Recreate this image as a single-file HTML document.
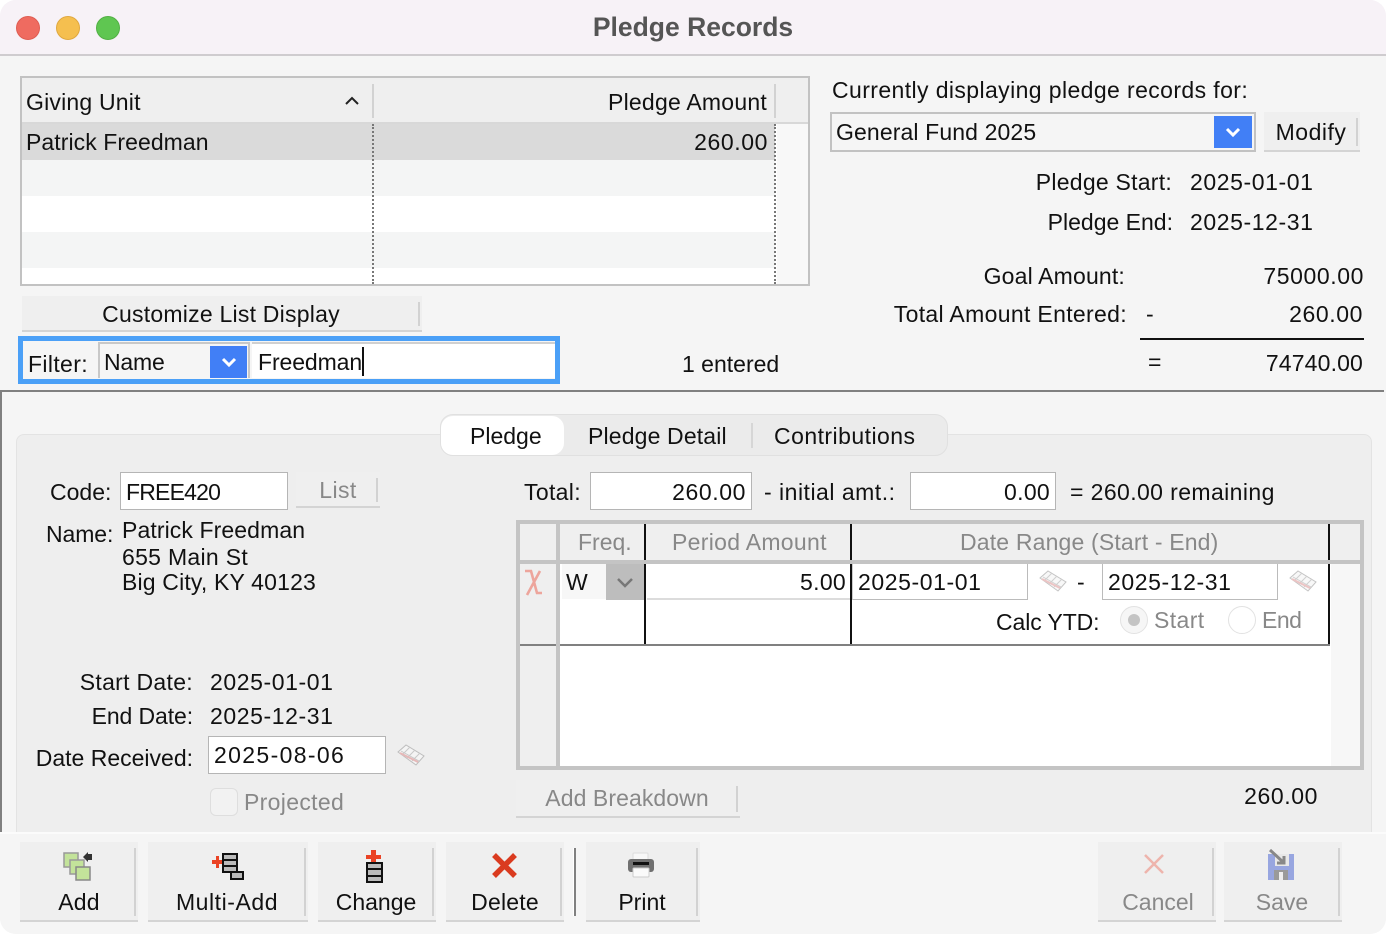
<!DOCTYPE html>
<html><head><meta charset="utf-8"><style>
html,body{margin:0;padding:0;background:#fff}
#w{position:relative;width:1386px;height:934px;overflow:hidden;background:#f5f5f5;border-radius:16px;font-family:"Liberation Sans",sans-serif;font-size:23px;color:#111}
.t{position:absolute;white-space:nowrap;line-height:28px;height:28px}
.g{color:#888}
.d{letter-spacing:.58px}
.b{position:absolute;box-sizing:border-box}
.btn{position:absolute;background:#efefef;border-bottom:2px solid #d4d4d4;box-sizing:border-box}
.btn:after{content:"";position:absolute;right:2px;top:6px;bottom:4px;width:2px;background:#d2d2d2}
.lbl{position:absolute;left:0;right:0;text-align:center;line-height:28px;white-space:nowrap}
svg{position:absolute;overflow:visible}
</style></head><body><div id="w">
<!-- title -->
<div class="b" style="left:0;top:0;width:1386px;height:54px;background:#f7f2f7"></div>
<div class="b" style="left:0;top:54px;width:1386px;height:2px;background:#cfcccf"></div>
<div class="b" style="left:16px;top:16px;width:24px;height:24px;border-radius:50%;background:#ef6b60;border:1px solid #df5d52"></div>
<div class="b" style="left:56px;top:16px;width:24px;height:24px;border-radius:50%;background:#f5bf4f;border:1px solid #e0a83f"></div>
<div class="b" style="left:96px;top:16px;width:24px;height:24px;border-radius:50%;background:#5fc651;border:1px solid #52b044"></div>
<div class="t" style="left:0;width:1386px;text-align:center;top:13px;font-weight:bold;font-size:26.5px;color:#555">Pledge Records</div>

<!-- list table -->
<div class="b" style="left:20px;top:76px;width:790px;height:210px;border:2px solid #c2c2c2;background:#fff"></div>
<div class="b" style="left:22px;top:78px;width:786px;height:44px;background:#efefef"></div>
<div class="b" style="left:22px;top:122px;width:786px;height:2px;background:#d8d8d8"></div>
<div class="b" style="left:22px;top:124px;width:753px;height:36px;background:#dadada"></div>
<div class="b" style="left:22px;top:160px;width:753px;height:36px;background:#f4f5f5"></div>
<div class="b" style="left:22px;top:232px;width:753px;height:36px;background:#f4f5f5"></div>
<div class="b" style="left:777px;top:124px;width:31px;height:160px;background:#f8f8f8"></div>
<div class="b" style="left:372px;top:84px;width:2px;height:34px;background:#d2d2d2"></div>
<div class="b" style="left:774px;top:84px;width:2px;height:34px;background:#d2d2d2"></div>
<div class="b" style="left:372px;top:124px;width:0;height:160px;border-left:2px dotted #777"></div>
<div class="b" style="left:774px;top:124px;width:0;height:160px;border-left:2px dotted #777"></div>
<div class="t" style="left:26px;top:88px;letter-spacing:.2px">Giving Unit</div>
<svg style="left:344px;top:94px" width="16" height="12"><path d="M2 10 L8 4 L14 10" fill="none" stroke="#222" stroke-width="2"/></svg>
<div class="t" style="right:619px;top:88px;letter-spacing:.23px">Pledge Amount</div>
<div class="t" style="left:26px;top:128px;letter-spacing:.07px">Patrick Freedman</div>
<div class="t d" style="right:618px;top:128px">260.00</div>

<!-- right info -->
<div class="t" style="left:832px;top:76px;letter-spacing:.4px">Currently displaying pledge records for:</div>
<div class="b" style="left:830px;top:112px;width:426px;height:40px;border:2px solid #c2c2c2"></div>
<div class="t" style="left:836px;top:118px;letter-spacing:.12px">General Fund 2025</div>
<div class="b" style="left:1214px;top:116px;width:38px;height:32px;background:#417ff6"></div>
<svg style="left:1214px;top:116px" width="38" height="32"><path d="M13 13 L19 19 L25 13" fill="none" stroke="#fff" stroke-width="3"/></svg>
<div class="btn" style="left:1264px;top:112px;width:96px;height:40px"><div class="lbl" style="top:6px;right:2px;letter-spacing:.5px">Modify</div></div>
<div class="t" style="right:214px;top:168px;letter-spacing:.25px">Pledge Start:</div><div class="t d" style="left:1190px;top:168px">2025-01-01</div>
<div class="t" style="right:213px;top:208px">Pledge End:</div><div class="t d" style="left:1190px;top:208px">2025-12-31</div>
<div class="t" style="right:261px;top:262px;letter-spacing:.17px">Goal Amount:</div><div class="t d" style="right:22px;top:262px">75000.00</div>
<div class="t" style="right:259px;top:300px;letter-spacing:.33px">Total Amount Entered:</div><div class="t" style="left:1146px;top:300px">-</div><div class="t d" style="right:23px;top:300px">260.00</div>
<div class="b" style="left:1140px;top:338px;width:224px;height:2px;background:#111"></div>
<div class="t" style="left:1148px;top:348px">=</div><div class="t" style="right:23px;top:349px;letter-spacing:.15px">74740.00</div>
<div class="t" style="left:682px;top:350px">1 entered</div>

<!-- customize & filter -->
<div class="btn" style="left:22px;top:296px;width:400px;height:36px"><div class="lbl" style="top:4px;right:2px;letter-spacing:.23px">Customize List Display</div></div>
<div class="b" style="left:18px;top:336px;width:542px;height:48px;border:5px solid #4ba0f7;background:#f5f5f5"></div>
<div class="t" style="left:28px;top:350px;letter-spacing:.35px">Filter:</div>
<div class="b" style="left:98px;top:342px;width:152px;height:36px;border-left:2px solid #c8c8c8;border-top:2px solid #c8c8c8;border-right:2px solid #c8c8c8"></div>
<div class="t" style="left:104px;top:348px;letter-spacing:-.2px">Name</div>
<div class="b" style="left:210px;top:346px;width:37px;height:32px;background:#417ff6"></div>
<svg style="left:210px;top:346px" width="37" height="32"><path d="M13 13 L19 19 L25 13" fill="none" stroke="#fff" stroke-width="3"/></svg>
<div class="b" style="left:252px;top:342px;width:303px;height:36px;background:#fff;border-top:2px solid #d0d0d0"></div>
<div class="t" style="left:258px;top:348px;letter-spacing:-.1px">Freedman</div>
<div class="b" style="left:362px;top:347px;width:2px;height:29px;background:#111"></div>

<!-- lower -->
<div class="b" style="left:0;top:390px;width:1384px;height:2px;background:#808080"></div>
<div class="b" style="left:0;top:390px;width:2px;height:442px;background:#808080"></div>
<div class="b" style="left:16px;top:434px;width:1356px;height:410px;background:#eeeeee;border:1px solid #e3e3e3;border-radius:8px"></div>
<div class="b" style="left:0;top:832px;width:1386px;height:102px;background:#f5f5f5;border-top:2px solid #fbfbfb"></div>

<!-- tabs -->
<div class="b" style="left:440px;top:414px;width:508px;height:42px;background:#ebebeb;border:1px solid #e0e0e0;border-radius:13px"></div>
<div class="b" style="left:441px;top:416px;width:123px;height:39px;background:#fff;border-radius:12px"></div>
<div class="b" style="left:751px;top:423px;width:2px;height:25px;background:#d6d6d6"></div>
<div class="t" style="left:470px;top:422px">Pledge</div>
<div class="t" style="left:588px;top:422px;letter-spacing:.15px">Pledge Detail</div>
<div class="t" style="left:774px;top:422px;letter-spacing:.46px">Contributions</div>

<!-- left form -->
<div class="t" style="left:50px;top:478px">Code:</div>
<div class="b" style="left:120px;top:472px;width:168px;height:38px;background:#fff;border:1px solid #b5b5b5"></div>
<div class="t" style="left:126px;top:478px;letter-spacing:-.8px">FREE420</div>
<div class="btn" style="left:296px;top:472px;width:84px;height:36px"><div class="lbl g" style="top:4px;right:0;letter-spacing:.4px">List</div></div>
<div class="t" style="left:46px;top:520px;letter-spacing:-.1px">Name:</div>
<div class="t" style="left:122px;top:516px;letter-spacing:.1px">Patrick Freedman</div>
<div class="t" style="left:122px;top:543px;letter-spacing:.3px">655 Main St</div>
<div class="t" style="left:122px;top:568px;letter-spacing:.17px">Big City, KY 40123</div>
<div class="t" style="right:1193px;top:668px;letter-spacing:.3px">Start Date:</div><div class="t d" style="left:210px;top:668px">2025-01-01</div>
<div class="t" style="right:1193px;top:702px;letter-spacing:-.1px">End Date:</div><div class="t d" style="left:210px;top:702px">2025-12-31</div>
<div class="t" style="right:1193px;top:744px">Date Received:</div>
<div class="b" style="left:208px;top:736px;width:178px;height:38px;background:#fff;border:1px solid #b5b5b5"></div>
<div class="t" style="left:214px;top:741px;letter-spacing:1.35px">2025-08-06</div>
<svg style="left:397px;top:744px" width="28" height="22" viewBox="0 0 28 22"><path d="M1 8 L9 1 L27 12 L19 21 Z" fill="#f4f4f4" stroke="#bdbdbd"/><path d="M5 11 L13 3 M10 14 L18 6 M15 17 L23 9 M4 7 L22 17" stroke="#c8c8c8"/><path d="M3 9 L21 18" stroke="#e6b8b8" stroke-width="2"/></svg>
<div class="b" style="left:210px;top:788px;width:28px;height:28px;background:#f2f2f2;border:1px solid #dedede;border-radius:6px"></div>
<div class="t g" style="left:244px;top:788px;letter-spacing:.33px">Projected</div>

<!-- right form -->
<div class="t" style="left:524px;top:478px;letter-spacing:.33px">Total:</div>
<div class="b" style="left:590px;top:472px;width:162px;height:38px;background:#fff;border:1px solid #b5b5b5"></div>
<div class="t d" style="right:640px;top:478px">260.00</div>
<div class="t" style="left:764px;top:478px;letter-spacing:.5px">- initial amt.:</div>
<div class="b" style="left:910px;top:472px;width:146px;height:38px;background:#fff;border:1px solid #b5b5b5"></div>
<div class="t" style="right:336px;top:478px;letter-spacing:.3px">0.00</div>
<div class="t" style="left:1070px;top:478px;letter-spacing:.4px">= 260.00 remaining</div>

<!-- grid -->
<div class="b" style="left:516px;top:520px;width:848px;height:250px;border:4px solid #c4c4c4;background:#fff"></div>
<div class="b" style="left:520px;top:524px;width:840px;height:36px;background:#efefef"></div>
<div class="b" style="left:520px;top:560px;width:840px;height:4px;background:#c4c4c4"></div>
<div class="b" style="left:520px;top:564px;width:36px;height:202px;background:#efefef"></div>
<div class="b" style="left:556px;top:524px;width:4px;height:242px;background:#c4c4c4"></div>
<div class="b" style="left:1331px;top:564px;width:29px;height:202px;background:#f7f7f7"></div>
<div class="b" style="left:644px;top:524px;width:2px;height:36px;background:#111"></div>
<div class="b" style="left:850px;top:524px;width:2px;height:36px;background:#111"></div>
<div class="b" style="left:1328px;top:524px;width:2px;height:36px;background:#111"></div>
<div class="b" style="left:644px;top:564px;width:2px;height:82px;background:#111"></div>
<div class="b" style="left:850px;top:564px;width:2px;height:82px;background:#111"></div>
<div class="b" style="left:1328px;top:564px;width:2px;height:82px;background:#111"></div>
<div class="b" style="left:520px;top:644px;width:36px;height:2px;background:#808080"></div>
<div class="b" style="left:560px;top:644px;width:770px;height:2px;background:#808080"></div>
<div class="t g" style="left:578px;top:528px">Freq.</div>
<div class="t g" style="left:672px;top:528px;letter-spacing:.3px">Period Amount</div>
<div class="t g" style="left:960px;top:528px;letter-spacing:.17px">Date Range (Start - End)</div>
<svg style="left:522px;top:568px" width="22" height="30" viewBox="0 0 22 30"><path d="M3 3 H9 L15 25 H20 M18 3 L5 27" fill="none" stroke="#eda59c" stroke-width="2.6"/></svg>
<div class="b" style="left:562px;top:564px;width:44px;height:35px;background:#f7f7f7"></div>
<div class="b" style="left:606px;top:564px;width:38px;height:36px;background:#bdbdbd"></div>
<svg style="left:606px;top:564px" width="38" height="36"><path d="M12 15 L19 22 L26 15" fill="none" stroke="#777" stroke-width="2.5"/></svg>
<div class="t" style="left:566px;top:568px">W</div>
<div class="b" style="left:647px;top:598px;width:203px;height:2px;background:#dcdcdc"></div>
<div class="t" style="right:540px;top:568px;letter-spacing:.3px">5.00</div>
<div class="b" style="left:852px;top:564px;width:176px;height:36px;border-left:1px solid #ccc;border-right:1px solid #bbb;border-bottom:1px solid #bbb"></div>
<div class="t d" style="left:858px;top:568px">2025-01-01</div>
<svg style="left:1039px;top:570px" width="28" height="22" viewBox="0 0 28 22"><path d="M1 8 L9 1 L27 12 L19 21 Z" fill="#f8f8f8" stroke="#c4c4c4"/><path d="M5 11 L13 3 M10 14 L18 6 M15 17 L23 9 M4 7 L22 17" stroke="#cfcfcf"/><path d="M3 9 L21 18" stroke="#ecc4c4" stroke-width="2"/></svg>
<div class="t" style="left:1077px;top:568px">-</div>
<div class="b" style="left:1102px;top:564px;width:176px;height:36px;border-left:1px solid #bbb;border-right:1px solid #bbb;border-bottom:1px solid #bbb"></div>
<div class="t d" style="left:1108px;top:568px">2025-12-31</div>
<svg style="left:1289px;top:570px" width="28" height="22" viewBox="0 0 28 22"><path d="M1 8 L9 1 L27 12 L19 21 Z" fill="#f8f8f8" stroke="#c4c4c4"/><path d="M5 11 L13 3 M10 14 L18 6 M15 17 L23 9 M4 7 L22 17" stroke="#cfcfcf"/><path d="M3 9 L21 18" stroke="#ecc4c4" stroke-width="2"/></svg>
<div class="t" style="left:996px;top:608px;letter-spacing:-.1px">Calc YTD:</div>
<div class="b" style="left:1120px;top:606px;width:28px;height:28px;border-radius:50%;background:#f6f6f6;border:1px solid #e2e2e2"></div>
<div class="b" style="left:1128px;top:614px;width:12px;height:12px;border-radius:50%;background:#c4c4c4"></div>
<div class="t g" style="left:1154px;top:606px;letter-spacing:.4px">Start</div>
<div class="b" style="left:1228px;top:606px;width:28px;height:28px;border-radius:50%;background:#fff;border:1px solid #e2e2e2"></div>
<div class="t g" style="left:1262px;top:606px;letter-spacing:-.5px">End</div>

<div class="btn" style="left:516px;top:780px;width:224px;height:38px"><div class="lbl g" style="top:4px;right:2px;letter-spacing:.08px">Add Breakdown</div></div>
<div class="t d" style="right:68px;top:782px">260.00</div>

<!-- toolbar -->
<div class="btn" style="left:20px;top:842px;width:118px;height:80px"><div class="lbl" style="top:46px;right:0;letter-spacing:.2px">Add</div>
<svg style="left:43px;top:10px" width="32" height="30"><rect x="1" y="1" width="14" height="14" fill="#c3e39a" stroke="#999" stroke-width="1.5"/><rect x="7" y="8" width="14" height="14" fill="#c3e39a" stroke="#999" stroke-width="1.5"/><rect x="13" y="15" width="14" height="13" fill="#c3e39a" stroke="#888" stroke-width="1.5"/><path d="M20 5 L25 0 V2 H29 V8 H25 V10 Z" fill="#333"/></svg></div>
<div class="btn" style="left:148px;top:842px;width:160px;height:80px"><div class="lbl" style="top:46px;right:2px;letter-spacing:.55px">Multi-Add</div>
<svg style="left:64px;top:11px" width="34" height="30"><path d="M0 7 H4 V3 H7 V7 H10 V11 H7 V15 H4 V11 H0 Z" fill="#ea4325"/><rect x="11" y="1" width="14" height="18" fill="#bbb" stroke="#111" stroke-width="2"/><path d="M11 7 H25 M11 13 H25" stroke="#111" stroke-width="2"/><rect x="19" y="19" width="12" height="7" fill="#bbb" stroke="#111" stroke-width="2"/></svg></div>
<div class="btn" style="left:318px;top:842px;width:118px;height:80px"><div class="lbl" style="top:46px;right:2px">Change</div>
<svg style="left:44px;top:8px" width="26" height="34"><path d="M6 0 H11 V5 H16 V9 H11 V13 H6 V9 H1 V5 H6 Z" transform="translate(3 0)" fill="#ea4325"/><rect x="5" y="13" width="15" height="19" fill="#bbb" stroke="#111" stroke-width="2"/><path d="M5 19 H20 M5 26 H20" stroke="#111" stroke-width="2"/></svg></div>
<div class="btn" style="left:446px;top:842px;width:118px;height:80px"><div class="lbl" style="top:46px;right:0;letter-spacing:.2px">Delete</div>
<svg style="left:46px;top:11px" width="26" height="26"><path d="M2 2 L23 23 M23 2 L2 23" stroke="#da3b1f" stroke-width="5.5"/></svg></div>
<div class="b" style="left:573px;top:848px;width:1px;height:68px;background:#fff"></div>
<div class="b" style="left:574px;top:848px;width:2px;height:68px;background:#808080"></div>
<div class="btn" style="left:586px;top:842px;width:114px;height:80px"><div class="lbl" style="top:46px;right:2px">Print</div>
<svg style="left:41px;top:10px" width="28" height="28"><rect x="6" y="1" width="15" height="8" rx="1" fill="#f8f8f8" stroke="#ddd"/><rect x="1" y="7" width="26" height="13" rx="3" fill="#707070"/><rect x="6" y="10" width="16" height="3" fill="#111"/><rect x="6" y="16" width="16" height="9" rx="1" fill="#fafafa" stroke="#ccc"/></svg></div>
<div class="btn" style="left:1098px;top:842px;width:118px;height:80px"><div class="lbl g" style="top:46px;left:2px;right:0">Cancel</div>
<svg style="left:45px;top:11px" width="22" height="22"><path d="M2 2 L20 20 M20 2 L2 20" stroke="#eeb4ac" stroke-width="2.5"/></svg></div>
<div class="btn" style="left:1224px;top:842px;width:118px;height:80px"><div class="lbl g" style="top:46px;right:2px">Save</div>
<svg style="left:44px;top:8px" width="28" height="32"><path d="M0 4 H26 V30 H0 Z" fill="#98a6e0"/><rect x="6" y="20" width="14" height="10" fill="#9a9a9a"/><rect x="11" y="22" width="4" height="8" fill="#eee"/><rect x="7" y="4" width="14" height="12" fill="#e8e8e8"/><path d="M2 0 L15 12 M9 13 H16 V6" fill="none" stroke="#888" stroke-width="3"/></svg></div>
</div></body></html>
